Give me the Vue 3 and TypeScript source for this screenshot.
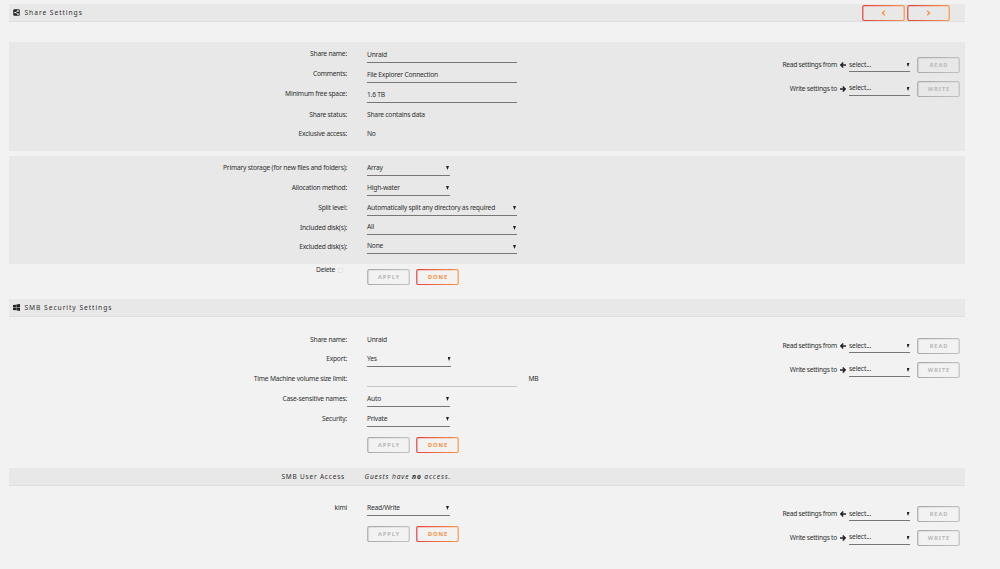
<script setup lang="ts">
interface Row {
  label: string
  value: string
  kind: 'text' | 'input' | 'select' | 'empty'
  size?: 'short' | 'medium' | 'long'
  height: number
  shift?: number
  unit?: string
}

const general: Row[] = [
  { label: 'Share name:', value: 'Unraid', kind: 'input', size: 'long', height: 20, shift: 1 },
  { label: 'Comments:', value: 'File Explorer Connection', kind: 'input', size: 'long', height: 20, shift: 1 },
  { label: 'Minimum free space:', value: '1.6 TB', kind: 'input', size: 'long', height: 21, shift: 1 },
  { label: 'Share status:', value: 'Share contains data', kind: 'text', height: 19 },
  { label: 'Exclusive access:', value: 'No', kind: 'text', height: 16 },
]
const storage: Row[] = [
  { label: 'Primary storage (for new files and folders):', value: 'Array', kind: 'select', size: 'short', height: 20 },
  { label: 'Allocation method:', value: 'High-water', kind: 'select', size: 'short', height: 20 },
  { label: 'Split level:', value: 'Automatically split any directory as required', kind: 'select', size: 'long', height: 20 },
  { label: 'Included disk(s):', value: 'All', kind: 'select', size: 'long', height: 19, shift: -1 },
  { label: 'Excluded disk(s):', value: 'None', kind: 'select', size: 'long', height: 16, shift: -1 },
]
const smb: Row[] = [
  { label: 'Share name:', value: 'Unraid', kind: 'text', height: 19 },
  { label: 'Export:', value: 'Yes', kind: 'select', size: 'medium', height: 20 },
  { label: 'Time Machine volume size limit:', value: '', kind: 'empty', size: 'long', height: 20, unit: 'MB' },
  { label: 'Case-sensitive names:', value: 'Auto', kind: 'select', size: 'short', height: 20 },
  { label: 'Security:', value: 'Private', kind: 'select', size: 'short', height: 18 },
]
const users: Row[] = [
  { label: 'kimi', value: 'Read/Write', kind: 'select', size: 'short', height: 18 },
]
const blocks = [
  { id: 'general', rows: general, copy: true },
  { id: 'storage', rows: storage, copy: false },
]
const access = [
  { id: 'smb', rows: smb },
  { id: 'users', rows: users },
]
const transfers = [
  { label: 'Read settings from', action: 'READ', back: true },
  { label: 'Write settings to', action: 'WRITE', back: false },
]
</script>

<template>
  <svg class="defs" width="0" height="0">
    <defs>
      <linearGradient id="hot" gradientUnits="userSpaceOnUse" x1="0" y1="0" x2="43" y2="0">
        <stop offset="0" stop-color="#e5413f" /><stop offset="1" stop-color="#fb9a4c" />
      </linearGradient>
      <linearGradient id="dim" gradientUnits="userSpaceOnUse" x1="0" y1="0" x2="43" y2="0">
        <stop offset="0" stop-color="#a8a8a8" /><stop offset="1" stop-color="#c2c2c2" />
      </linearGradient>
    </defs>
  </svg>
  <main class="page">
    <header class="bar first">
      <svg class="icon" viewBox="0 0 14 14"><rect x="0.5" y="0.5" width="13" height="13" rx="2.5" fill="#222" /><path d="M10 3.8 4.5 7l5.5 3.2" fill="none" stroke="#eee" stroke-width="1.3" /><g fill="#eee"><circle cx="10" cy="3.8" r="1.7" /><circle cx="4.2" cy="7" r="1.7" /><circle cx="10" cy="10.2" r="1.7" /></g></svg>
      <span class="title">Share Settings</span>
      <nav class="pager">
        <button class="btn hot"><svg class="frame" viewBox="0 0 43 16"><rect x=".8" y=".7" width="41.4" height="14.8" rx="1.5" stroke="url(#hot)" /></svg><svg class="chev" viewBox="0 0 5 6"><path d="M3.8.7 1.4 3l2.4 2.3" /></svg></button>
        <button class="btn hot"><svg class="frame" viewBox="0 0 43 16"><rect x=".8" y=".7" width="41.4" height="14.8" rx="1.5" stroke="url(#hot)" /></svg><svg class="chev" viewBox="0 0 5 6"><path d="M1.2.7 3.6 3 1.2 5.3" /></svg></button>
      </nav>
    </header>

    <section v-for="b in blocks" :key="b.id" class="panel" :class="b.id">
      <div class="form">
        <div v-for="r in b.rows" :key="r.label" class="row" :style="{ height: r.height + 'px' }">
          <label class="label">{{ r.label }}</label>
          <div class="field" :class="[r.kind, r.size, { down: r.shift === 1, up: r.shift === -1 }]">
            <span>{{ r.value }}</span><i v-if="r.kind === 'select'" class="tri"></i>
          </div>
        </div>
      </div>
      <aside v-if="b.copy" class="copy">
        <div v-for="t in transfers" :key="t.action" class="transfer">
          <span class="tlabel">{{ t.label }}</span>
          <svg class="arrow" :class="{ back: t.back }" viewBox="0 0 12 12"><path d="M0 6h10M5.5 1.2 10.3 6l-4.8 4.8" /></svg>
          <div class="pick" :class="{ high: !t.back }"><span>select...</span><i class="tri"></i></div>
          <button class="btn dim"><svg class="frame" viewBox="0 0 43 16"><rect x=".8" y=".7" width="41.4" height="14.8" rx="1.5" stroke="url(#dim)" /></svg><span>{{ t.action }}</span></button>
        </div>
      </aside>
    </section>

    <div class="finish">
      <label class="label del">Delete<i class="box"></i></label>
      <div class="actions">
        <button class="btn dim"><svg class="frame" viewBox="0 0 43 16"><rect x=".8" y=".7" width="41.4" height="14.8" rx="1.5" stroke="url(#dim)" /></svg><span>APPLY</span></button>
        <button class="btn hot"><svg class="frame" viewBox="0 0 43 16"><rect x=".8" y=".7" width="41.4" height="14.8" rx="1.5" stroke="url(#hot)" /></svg><span>DONE</span></button>
      </div>
    </div>

    <template v-for="a in access" :key="a.id">
      <header v-if="a.id === 'smb'" class="bar second">
        <svg class="icon" viewBox="0 0 14 14"><path d="M0 2.2 5.9 1.3V6.6H0zM6.6 1.2 14 .1V6.6H6.6zM0 7.3H5.9V12.6L0 11.8zM6.6 7.3H14V13.8L6.6 12.7z" fill="#222" /></svg>
        <span class="title">SMB Security Settings</span>
      </header>
      <header v-else class="bar third">
        <span class="title who">SMB User Access</span>
        <em class="title note">Guests have <b>no</b> access.</em>
      </header>
      <section class="open" :class="a.id">
        <div class="form">
          <div v-for="r in a.rows" :key="r.label" class="row" :style="{ height: r.height + 'px' }">
            <label class="label">{{ r.label }}</label>
            <div class="field" :class="[r.kind, r.size]">
              <span>{{ r.value }}</span><i v-if="r.kind === 'select'" class="tri"></i>
            </div>
            <span v-if="r.unit" class="unit">{{ r.unit }}</span>
          </div>
          <div class="actions lower">
            <button class="btn dim"><svg class="frame" viewBox="0 0 43 16"><rect x=".8" y=".7" width="41.4" height="14.8" rx="1.5" stroke="url(#dim)" /></svg><span>APPLY</span></button>
            <button class="btn hot"><svg class="frame" viewBox="0 0 43 16"><rect x=".8" y=".7" width="41.4" height="14.8" rx="1.5" stroke="url(#hot)" /></svg><span>DONE</span></button>
          </div>
        </div>
        <aside class="copy">
          <div v-for="t in transfers" :key="t.action" class="transfer">
            <span class="tlabel">{{ t.label }}</span>
            <svg class="arrow" :class="{ back: t.back }" viewBox="0 0 12 12"><path d="M0 6h10M5.5 1.2 10.3 6l-4.8 4.8" /></svg>
            <div class="pick" :class="{ high: !t.back }"><span>select...</span><i class="tri"></i></div>
            <button class="btn dim"><svg class="frame" viewBox="0 0 43 16"><rect x=".8" y=".7" width="41.4" height="14.8" rx="1.5" stroke="url(#dim)" /></svg><span>{{ t.action }}</span></button>
          </div>
        </aside>
      </section>
    </template>
  </main>
</template>

<style>
html, body { margin: 0; background: #f2f2f2; }
</style>

<style scoped>
.defs { position: absolute; }
.page { box-sizing: border-box; width: 1000px; height: 569px; overflow: hidden; padding: 4px 35px 0 8.5px; background: #f2f2f2; color: #303030; font: 6.7px/16px "Noto Sans", "Open Sans", sans-serif; letter-spacing: -0.22px; }
.bar { box-sizing: border-box; display: flex; align-items: center; height: 18px; background: #e8e8e8; border-bottom: 1px solid #dedede; }
.icon { width: 7px; height: 7px; margin-left: 4.5px; }
.title { font-size: 6.7px; letter-spacing: 0.94px; white-space: nowrap; }
.icon + .title { margin-left: 4.5px; }
.second .title { padding-top: 1px; }
.pager { display: flex; gap: 2px; margin: 0 15px 0 auto; }
.btn { position: relative; display: flex; align-items: center; justify-content: center; width: 43px; height: 16px; padding: 0; border: 0; background: none; font: bold 5.7px/16px "Noto Sans", sans-serif; letter-spacing: 0.9px; color: #b8b8b8; }
.btn span { padding-left: 1px; }
.btn.hot { color: #fb8f3c; }
.frame { position: absolute; inset: 0; width: 43px; height: 16px; fill: none; stroke-width: 1.2; }
.chev { width: 5px; height: 6px; fill: none; stroke: #fb8f3c; stroke-width: 1.3; }
.panel { display: flex; box-sizing: border-box; background: #e8e8e8; }
.general { margin-top: 20px; height: 109px; padding-top: 4px; }
.storage { margin-top: 5px; height: 108px; padding-top: 4px; }
.form { flex: 1; }
.row { display: flex; }
.label { flex: none; width: 338.5px; text-align: right; white-space: nowrap; }
.field { position: relative; box-sizing: border-box; display: flex; justify-content: space-between; height: 16px; margin-left: 20px; white-space: nowrap; }
.short { width: 82.5px; }
.medium { width: 84px; }
.long { width: 149.5px; }
.input, .select { border-bottom: 1px solid #777; }
.empty { border-bottom: 1px solid #c6c6c6; }
.down { margin-top: 1px; }
.up { margin-top: -1px; }
.unit { margin-left: 12px; }
.tri { width: 3px; height: 4px; margin: 6px 0.5px 0 0; background: #222; clip-path: polygon(0 0, 100% 0, 50% 100%); }
.up .tri { margin-top: 7px; }
.copy { width: 190px; flex: none; }
.general .copy { padding-top: 11px; }
.smb .copy { padding-top: 6px; }
.users .copy { padding-top: 6px; }
.transfer { display: flex; height: 24px; margin-right: 5px; }
.tlabel { flex: 1; text-align: right; white-space: nowrap; letter-spacing: -0.27px; }
.arrow { width: 6px; height: 6px; margin: 5px 3px 0; fill: none; stroke: #222; stroke-width: 2.8; }
.back { transform: scaleX(-1); }
.pick { box-sizing: border-box; display: flex; justify-content: space-between; width: 61px; height: 15px; border-bottom: 1px solid #777; margin-right: 7px; letter-spacing: -0.15px; }
.high { line-height: 14px; }
.finish { display: flex; height: 35px; }
.del { line-height: 12px; }
.box { display: inline-block; width: 5px; height: 5px; margin: 0 4px 0 3px; border: 1px solid #e4e4e4; vertical-align: middle; background: #f5f5f5; box-sizing: border-box; }
.actions { display: flex; gap: 6px; margin: 5px 0 0 20px; }
.lower { margin: 8px 0 0 358.5px; }
.open { display: flex; box-sizing: border-box; }
.smb { height: 151px; padding-top: 15px; }
.users { padding-top: 14px; }
.who { width: 336.5px; text-align: right; font-size: 6.5px; letter-spacing: 0.8px; }
.note { margin-left: 19.5px; letter-spacing: 0.85px; }
.note b { color: #222; }
</style>
